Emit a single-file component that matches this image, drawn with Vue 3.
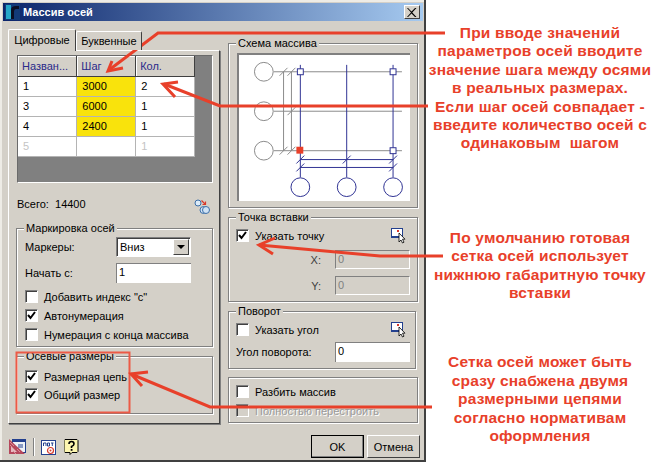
<script setup>
const rows = [
  { name: '1', step: '3000', count: '2' },
  { name: '3', step: '6000', count: '1' },
  { name: '4', step: '2400', count: '1' },
  { name: '5', step: '', count: '1', ghost: true },
]

const notes = [
  { cls: 'n1', lines: ['При вводе значений', 'параметров осей вводите', 'значение шага между осями', 'в реальных размерах.', 'Если шаг осей совпадает -', 'введите количество осей с', 'одинаковым\u00a0 шагом'] },
  { cls: 'n2', lines: ['По умолчанию готовая', 'сетка осей использует', 'нижнюю габаритную точку', 'вставки'] },
  { cls: 'n3', lines: ['Сетка осей может быть', 'сразу снабжена двумя', 'размерными цепями', 'согласно нормативам', 'оформления'] },
]

// scheme coordinates are relative to the white picture box
const grayCircles = [17, 57, 97]
const blueAxes = [62, 109, 156]
const grayTicks = [[45, 17], [53, 17], [53, 57], [45, 97], [53, 97]]
const blueTicks = [[62, 106], [62, 114], [109, 106], [156, 106], [156, 114]]
</script>

<template>
  <div class="page">
    <div class="dialog">
      <div class="titlebar">
        <svg class="logo" width="15" height="16" viewBox="0 0 15 16">
          <rect width="15" height="16" fill="#123a78" />
          <rect x="1" y="1" width="5" height="14" fill="#25a7c9" />
          <path d="M6 15V6Q6 2 11 2h3v3h-3Q9 5 9 8v7z" fill="#0a0f24" />
        </svg>
        <span class="title-text">Массив осей</span>
        <span class="close">
          <svg width="10" height="9" viewBox="0 0 10 9"><path d="M1 0l3.500 3.500L8 0h1.500L5.300 4.500 9.500 9H8L4.500 5.500 1 9H0l4-4.500L0 0z" fill="#000" /></svg>
        </span>
      </div>

      <div class="main">
        <div class="left">
          <div class="tabs">
            <div class="tab active">Цифровые</div>
            <div class="tab">Буквенные</div>
          </div>
          <div class="panel">
            <div class="grid-box">
              <table class="axes">
                <thead>
                  <tr>
                    <th>Назван...</th>
                    <th>Шаг</th>
                    <th>Кол.</th>
                  </tr>
                </thead>
                <tbody>
                  <tr v-for="r in rows" :key="r.name" :class="{ ghost: r.ghost }">
                    <td>{{ r.name }}</td>
                    <td :class="{ yellow: !r.ghost }">{{ r.step }}</td>
                    <td>{{ r.count }}</td>
                  </tr>
                </tbody>
              </table>
            </div>

            <div class="total">
              <span>Всего:&nbsp; 14400</span>
              <svg class="swap" width="17" height="16" viewBox="0 0 17 16">
                <circle cx="4" cy="4" r="3" fill="#dcebf8" stroke="#3d6fa8" />
                <circle cx="9.500" cy="11" r="3.500" fill="#cfe2f5" stroke="#3d6fa8" />
                <circle cx="12" cy="11" r="3.500" fill="#cfe2f5" stroke="#3d6fa8" />
                <path d="M7.500 1.500l4 4M11.500 2.500v3h-3" fill="none" stroke="#d8392b" stroke-width="1.200" />
              </svg>
            </div>

            <div class="group markers">
              <span class="legend">Маркировка осей</span>
              <div class="field">
                <span>Маркеры:</span>
                <div class="select">
                  <span class="select-val">Вниз</span>
                  <span class="select-btn"><i></i></span>
                </div>
              </div>
              <div class="field start">
                <span>Начать с:</span>
                <div class="input">1</div>
              </div>
              <div class="check-row first"><span class="box"></span>Добавить индекс "с"</div>
              <div class="check-row">
                <span class="box"><svg width="11" height="11" viewBox="0 0 11 11"><path d="M2 5l2.500 3L9 2" fill="none" stroke="#000" stroke-width="2" /></svg></span>Автонумерация
              </div>
              <div class="check-row"><span class="box"></span>Нумерация с конца массива</div>
            </div>

            <div class="group sizes">
              <span class="legend">Осевые размеры</span>
              <div class="check-row">
                <span class="box"><svg width="11" height="11" viewBox="0 0 11 11"><path d="M2 5l2.500 3L9 2" fill="none" stroke="#000" stroke-width="2" /></svg></span>Размерная цепь
              </div>
              <div class="check-row">
                <span class="box"><svg width="11" height="11" viewBox="0 0 11 11"><path d="M2 5l2.500 3L9 2" fill="none" stroke="#000" stroke-width="2" /></svg></span>Общий размер
              </div>
            </div>
          </div>

          <div class="tools">
            <svg width="17" height="16" viewBox="0 0 17 16">
              <rect x="3.500" y="0.500" width="13" height="13" fill="#eef2f8" stroke="#23408e" />
              <rect x="4" y="1" width="12" height="2" fill="#23408e" />
              <path d="M9 6h5M9 8h5" stroke="#23408e" />
              <path d="M0 0v15h16z" fill="#b5485c" />
              <path d="M2 7v6h6z" fill="#e5b9bf" />
              <path d="M1 3l4 4M1 6l2 2M4 12l3 3M8 10l3 3" stroke="#d98e98" />
            </svg>
            <span class="tool-sep"></span>
            <svg width="15" height="15" viewBox="0 0 15 15">
              <rect x="0.500" y="0.500" width="14" height="14" fill="#fff" stroke="#23408e" />
              <path d="M2.500 3v3M2.500 3H5v3M6.500 3h2v3h-2zM10 3h2.500M11.300 3v3" fill="none" stroke="#23408e" />
              <circle cx="9.500" cy="10.500" r="3" fill="#fff" stroke="#d8392b" stroke-width="1.200" />
              <circle cx="9.500" cy="10.500" r="1" fill="#d8392b" />
            </svg>
            <svg class="help" width="15" height="16" viewBox="0 0 15 16">
              <path d="M1 0.500h12l1 1v11l-1 1H8l-2 2v-2H1l-1-1v-11z" fill="#fdf6b0" stroke="#000" />
              <path d="M5 5Q5 2.500 7.500 2.500T10 5Q10 6.500 7.500 7.500V9" fill="none" stroke="#000" stroke-width="1.600" />
              <rect x="6.700" y="10" width="1.800" height="1.800" fill="#000" />
            </svg>
          </div>
        </div>

        <div class="right">
          <div class="group scheme">
            <span class="legend">Схема массива</span>
            <svg class="scheme-pic" width="173" height="148" viewBox="0 0 173 148">
              <g fill="none" stroke="#8a8a8a">
                <circle v-for="y in grayCircles" :key="y" cx="25" :cy="y" r="9.500" />
                <path d="M35 17H165M35 57H165M35 97H165M45 17V97M53 17V97" />
                <path v-for="(t, i) in grayTicks" :key="i" :d="`M${t[0] - 4} ${t[1] + 4}L${t[0] + 4} ${t[1] - 4}`" />
              </g>
              <g fill="none" stroke="#2e3192">
                <path v-for="x in blueAxes" :key="x" :d="`M${x} 10V124`" />
                <path d="M62 106H156M62 114H156" />
                <circle v-for="x in blueAxes" :key="'c' + x" :cx="x" cy="134" r="9.500" />
                <path v-for="(t, i) in blueTicks" :key="'t' + i" :d="`M${t[0] - 4} ${t[1] + 4}L${t[0] + 4} ${t[1] - 4}`" />
                <rect x="59" y="14" width="6" height="6" fill="#fff" />
                <rect x="153" y="14" width="6" height="6" fill="#fff" />
                <rect x="153" y="94" width="6" height="6" fill="#fff" />
              </g>
              <rect x="58" y="93" width="7" height="7" fill="#e8402a" />
            </svg>
          </div>

          <div class="group insert">
            <span class="legend">Точка вставки</span>
            <div class="check-row pick">
              <span class="box"><svg width="11" height="11" viewBox="0 0 11 11"><path d="M2 5l2.500 3L9 2" fill="none" stroke="#000" stroke-width="2" /></svg></span>Указать точку
              <svg class="pick-icon" width="15" height="16" viewBox="0 0 15 16">
                <rect x="0.500" y="0.500" width="11" height="8" fill="#fff" stroke="#23408e" />
                <path d="M0 9.500h10" stroke="#23408e" />
                <path d="M6 2l2 2M8 2l-2 2" stroke="#d8392b" />
                <path d="M8 5v9l2-2 1.500 3 1.500-.8-1.500-3H14z" fill="#fff" stroke="#000" stroke-width="0.800" />
              </svg>
            </div>
            <div class="coord"><span class="axis-lbl">X:</span><div class="input off">0</div></div>
            <div class="coord"><span class="axis-lbl">Y:</span><div class="input off">0</div></div>
          </div>

          <div class="group rotate">
            <span class="legend">Поворот</span>
            <div class="check-row pick">
              <span class="box"></span>Указать угол
              <svg class="pick-icon" width="15" height="16" viewBox="0 0 15 16">
                <rect x="0.500" y="0.500" width="11" height="8" fill="#fff" stroke="#23408e" />
                <path d="M0 9.500h10" stroke="#23408e" />
                <path d="M6 2l2 2M8 2l-2 2" stroke="#d8392b" />
                <path d="M8 5v9l2-2 1.500 3 1.500-.8-1.500-3H14z" fill="#fff" stroke="#000" stroke-width="0.800" />
              </svg>
            </div>
            <div class="field angle">
              <span>Угол поворота:</span>
              <div class="input">0</div>
            </div>
          </div>

          <div class="group explode">
            <div class="check-row"><span class="box"></span>Разбить массив</div>
            <div class="check-row disabled"><span class="box"></span>Полностью перестроить</div>
          </div>

          <div class="buttons">
            <div class="btn default">OK</div>
            <div class="btn">Отмена</div>
          </div>
        </div>
      </div>
    </div>

    <div class="notes">
      <p v-for="n in notes" :key="n.cls" :class="n.cls">
        <template v-for="l in n.lines" :key="l">{{ l }}<br /></template>
      </p>
    </div>

    <!-- callout arrows over the dialog -->
    <svg class="callouts" width="654" height="464" viewBox="0 0 654 464">
      <rect x="16.500" y="352.500" width="113" height="60" fill="none" stroke="#ec5a46" stroke-width="2" />
      <g fill="none" stroke="#e8402a" stroke-width="3">
        <path d="M445 33H158L109 70" />
        <path d="M112 61L108 71L123 68" />
        <path d="M428 106H220L164 84" />
        <path d="M178 82L163 84L175 97" />
        <path d="M443 256H380L259 245" />
        <path d="M275 238L259 245L273 254" />
        <path d="M432 407H210L131 374" />
        <path d="M148 372L131 374L142 386" />
      </g>
    </svg>
  </div>
</template>

<style scoped>
.page {
  position: relative;
  width: 654px;
  height: 464px;
  display: flex;
  background: #fff;
  overflow: hidden;
  font-family: "Liberation Sans", Arial, sans-serif;
  font-size: 11px;
  color: #000;
}

.callouts { position: absolute; left: 0; top: 0; pointer-events: none; }

.dialog {
  width: 426px;
  height: 462px;
  flex: none;
  box-sizing: border-box;
  background: #d4d0c8;
  padding-top: 3px;
  border-right: 2px solid #404040;
  border-bottom: 2px solid #404040;
  box-shadow: inset 2px 2px 0 #eeece6;
}

.titlebar {
  height: 18px;
  margin: 0 1px 0 3px;
  padding: 0 3px 0 2px;
  display: flex;
  align-items: center;
  background: linear-gradient(90deg, #0a246a, #a6caf0);
  color: #fff;
  font-weight: 700;
}
.logo { margin-right: 3px; }
.title-text { flex: 1; }
.close {
  width: 16px;
  height: 14px;
  box-sizing: border-box;
  display: flex;
  align-items: center;
  justify-content: center;
  background: #d4d0c8;
  border: 1px solid;
  border-color: #fff #404040 #404040 #fff;
}

.main {
  display: grid;
  grid-template-columns: 212px 190px;
  column-gap: 8px;
  padding: 8px 0 0 8px;
}

.tabs { display: flex; align-items: flex-end; height: 21px; position: relative; z-index: 1; }
.tab {
  height: 19px;
  width: 66px;
  box-sizing: border-box;
  padding-top: 3px;
  text-align: center;
  background: #d4d0c8;
  border: 1px solid #fff;
  border-right-color: #404040;
  border-bottom: none;
  border-radius: 2px 2px 0 0;
}
.tab.active { height: 22px; width: 68px; margin-bottom: -1px; padding-top: 4px; }

.panel {
  height: 374px;
  box-sizing: border-box;
  padding: 4px 6px 0 8px;
  border: 1px solid;
  border-color: #fff #404040 #404040 #fff;
  box-shadow: 1px 1px 0 #808080;
}

.grid-box {
  height: 128px;
  background: #808080;
  border: 1px solid #6a6a6a;
  border-right-color: #fff;
  border-bottom-color: #fff;
  box-sizing: border-box;
}
.axes { border-collapse: collapse; table-layout: fixed; width: 177px; }
.axes th {
  height: 20px;
  padding: 0 0 0 4px;
  box-sizing: border-box;
  background: #d4d0c8;
  color: #2a2a8a;
  font-weight: 400;
  text-align: left;
  border-right: 1px solid #404040;
  border-bottom: 1px solid #404040;
  box-shadow: inset 1px 1px 0 #fff;
}
.axes td {
  height: 20px;
  padding: 0 0 0 5px;
  box-sizing: border-box;
  background: #fff;
  border: 1px solid #b4b4b4;
  border-top: none;
  border-left: none;
}
.axes td.yellow { background: #f9e30c; }
.axes .ghost td { color: #c4c4c4; }

.total {
  display: flex;
  align-items: center;
  justify-content: space-between;
  height: 16px;
  margin-top: 13px;
  padding-right: 2px;
}
.swap { margin-top: 5px; }

.group {
  position: relative;
  box-sizing: border-box;
  border: 1px solid #808080;
  box-shadow: 1px 1px 0 #fff, inset 1px 1px 0 #fff;
}
.legend {
  position: absolute;
  left: 7px;
  top: -8px;
  padding: 0 2px;
  background: #d4d0c8;
  line-height: 14px;
}

.markers { height: 119px; margin: 16px 0 0 -1px; padding: 8px 21px 0 8px; }
.sizes { height: 58px; margin: 9px 0 0 -1px; padding: 13px 8px 0; }
.sizes .check-row { margin-bottom: 5px; }

.field { display: flex; align-items: center; justify-content: space-between; }
.start { margin-top: 6px; }

.select {
  width: 75px;
  height: 20px;
  box-sizing: border-box;
  display: flex;
  background: #fff;
  border: 1px solid;
  border-color: #808080 #fff #fff #808080;
  box-shadow: inset 1px 1px 0 #404040;
  padding: 1px 1px 1px 3px;
  align-items: center;
}
.select-val { flex: 1; }
.select-btn {
  width: 16px;
  height: 16px;
  box-sizing: border-box;
  background: #d4d0c8;
  border: 1px solid;
  border-color: #fff #404040 #404040 #fff;
  display: flex;
  align-items: center;
  justify-content: center;
}
.select-btn i {
  width: 0;
  height: 0;
  border: 4px solid transparent;
  border-top: 4px solid #000;
  border-bottom: none;
}

.input {
  width: 75px;
  height: 20px;
  box-sizing: border-box;
  padding-left: 2px;
  background: #fff;
  border-top: 1px solid #808080;
  border-left: 1px solid #808080;
  line-height: 16px;
}
.input.off {
  background: #d4d0c8;
  color: #808080;
  border: 1px solid #808080;
  border-right-color: #fff;
  border-bottom-color: #fff;
}

.check-row {
  display: flex;
  align-items: center;
  height: 13px;
  margin-bottom: 6px;
  white-space: nowrap;
}
.check-row.first { margin-top: 7px; }
.box {
  width: 13px;
  height: 13px;
  flex: none;
  box-sizing: border-box;
  margin-right: 6px;
  background: #fff;
  border: 1px solid;
  border-color: #808080 #fff #fff #808080;
  box-shadow: inset 1px 1px 0 #404040;
  display: flex;
  align-items: center;
  justify-content: center;
}
.disabled { color: #9a9a9a; text-shadow: 1px 1px 0 #fff; }
.disabled .box { background: #d4d0c8; }

.tools {
  display: flex;
  align-items: center;
  margin-top: 14px;
  padding-left: 1px;
}
.tool-sep {
  width: 1px;
  height: 18px;
  margin: 0 7px;
  background: #808080;
  box-shadow: 1px 0 0 #fff;
}
.help { margin-left: 8px; }

.right { padding-top: 14px; display: flex; flex-direction: column; }
.scheme { height: 165px; padding: 9px 0 0 8px; }
.scheme-pic {
  display: block;
  background: #fff;
  border-top: 2px solid #808080;
  border-left: 2px solid #808080;
  box-sizing: border-box;
}

.insert { height: 85px; margin-top: 9px; padding: 11px 7px 0; }
.rotate { height: 58px; margin-top: 9px; width: 188px; padding: 11px 5px 0 7px; }
.explode { height: 46px; margin-top: 8px; padding: 7px 7px 0; }

.pick { justify-content: flex-start; }
.pick-icon { margin-left: auto; margin-right: 4px; }
.coord { display: flex; justify-content: flex-end; align-items: center; margin-top: 7px; }
.pick + .coord { margin-top: 8px; }
.coord .input { height: 19px; }
.axis-lbl { margin-right: 14px; color: #404040; }
.angle { margin-top: 6px; }

.buttons { display: flex; justify-content: flex-end; gap: 3px; margin-top: 12px; margin-right: -2px; }
.btn {
  width: 53px;
  height: 23px;
  box-sizing: border-box;
  display: flex;
  align-items: center;
  justify-content: center;
  background: #d4d0c8;
  border: 1px solid;
  border-color: #fff #404040 #404040 #fff;
}
.btn.default { outline: 1px solid #000; outline-offset: -1px; box-shadow: inset -1px -1px 0 #808080; }

.notes {
  flex: 1;
  color: #e8402a;
  font-weight: 700;
  font-size: 15.500px;
  letter-spacing: 0.200px;
  line-height: 18.400px;
  text-align: center;
}
.notes p { margin: 0; white-space: nowrap; }
.n1 { margin-top: 24px !important; }
.n2 { margin-top: 76px !important; }
.n3 { margin-top: 51px !important; }
</style>

<style>
html, body { margin: 0; background: #fff; }
</style>
